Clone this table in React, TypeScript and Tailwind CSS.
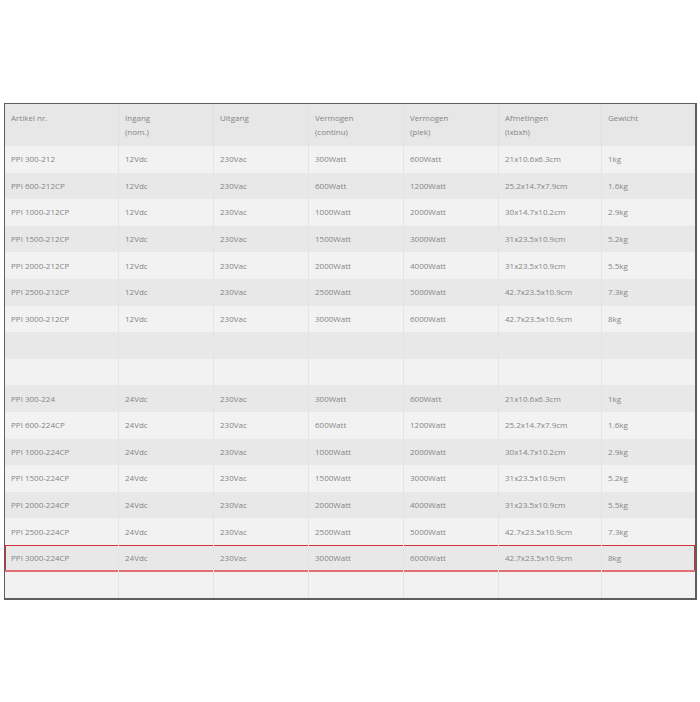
import React from 'react';

type Row = string[] | null;

const headers: [string, string?][] = [
  ['Artikel nr.'],
  ['Ingang', '(nom.)'],
  ['Uitgang'],
  ['Vermogen', '(continu)'],
  ['Vermogen', '(piek)'],
  ['Afmetingen', '(lxbxh)'],
  ['Gewicht'],
];

const colWidths = [114, 95, 95, 95, 95, 103, 93];

const specs = [
  ['300', '300Watt', '600Watt', '21x10.6x6.3cm', '1kg'],
  ['600', '600Watt', '1200Watt', '25.2x14.7x7.9cm', '1.6kg'],
  ['1000', '1000Watt', '2000Watt', '30x14.7x10.2cm', '2.9kg'],
  ['1500', '1500Watt', '3000Watt', '31x23.5x10.9cm', '5.2kg'],
  ['2000', '2000Watt', '4000Watt', '31x23.5x10.9cm', '5.5kg'],
  ['2500', '2500Watt', '5000Watt', '42.7x23.5x10.9cm', '7.3kg'],
  ['3000', '3000Watt', '6000Watt', '42.7x23.5x10.9cm', '8kg'],
];

const makeRows = (volt: string): Row[] =>
  specs.map(([model, cont, peak, dim, weight], i) => [
    `PPI ${model}-2${volt}${i === 0 ? '' : 'CP'}`,
    `${volt}Vdc`,
    '230Vac',
    cont,
    peak,
    dim,
    weight,
  ]);

const rows: Row[] = [...makeRows('12'), null, null, ...makeRows('24'), null];
const highlighted = 15;

export default function App() {
  return (
    <div className="min-h-[702px] w-[700px] bg-white pt-[103px] pl-[4px]">
      <table
        className="w-[692px] table-fixed border-separate border-spacing-0 border border-r-2 border-b-2 border-[#5e5e5e] text-[8px] text-[#858585]"
        style={{ fontFamily: '"Open Sans", "Liberation Sans", sans-serif' }}
      >
        <colgroup>
          {colWidths.map((w, i) => (
            <col key={i} style={{ width: w }} />
          ))}
        </colgroup>
        <thead>
          <tr className="bg-[#e7e7e7]">
            {headers.map(([a, b], i) => (
              <th
                key={i}
                className={`h-[42px] px-[6px] py-[7px] text-left align-top font-normal leading-[14px] ${
                  i < headers.length - 1 ? 'border-r border-[#e0e0e0]' : ''
                }`}
              >
                <div>{a}</div>
                {b && <div>{b}</div>}
              </th>
            ))}
          </tr>
        </thead>
        <tbody>
          {rows.map((row, r) => {
            const isHi = r === highlighted;
            return (
              <tr key={r} className={r % 2 === 0 ? 'bg-[#f2f2f2]' : 'bg-[#e8e8e8]'}>
                {colWidths.map((_, c) => {
                  const last = c === colWidths.length - 1;
                  let shadow = '';
                  if (isHi) {
                    if (c === 0) shadow = 'shadow-[inset_0_1px_0_#d2313a,inset_0_-2px_0_#e46f74,inset_1px_0_0_#d2313a]';
                    else if (last) shadow = 'shadow-[inset_0_1px_0_#d2313a,inset_0_-2px_0_#e46f74,inset_-1px_0_0_#d2313a]';
                    else shadow = 'shadow-[inset_0_1px_0_#d2313a,inset_0_-2px_0_#e46f74]';
                  }
                  return (
                    <td
                      key={c}
                      className={`h-[26.6px] px-[6px] py-0 align-middle leading-[12px] whitespace-nowrap ${
                        last ? '' : 'border-r border-[#e4e4e4]'
                      } ${shadow}`}
                    >
                      {row ? row[c] : ''}
                    </td>
                  );
                })}
              </tr>
            );
          })}
        </tbody>
      </table>
    </div>
  );
}
